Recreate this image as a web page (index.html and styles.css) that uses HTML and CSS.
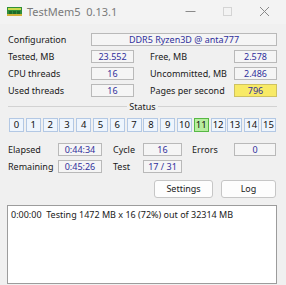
FILE: index.html
```html
<!DOCTYPE html>
<html>
<head>
<meta charset="utf-8">
<link rel="stylesheet" href="styles.css">
</head>
<body>
<div class="window">
  <div class="titlebar">
    <svg class="appicon" width="15" height="9" viewBox="0 0 15 9">
      <rect x="0" y="0" width="15" height="9" fill="#2f8f3a"/>
      <rect x="1" y="1" width="13" height="2" fill="#c9d94a"/>
      <rect x="2" y="4" width="3" height="3" fill="#1e6b2a"/>
      <rect x="6" y="4" width="3" height="3" fill="#1e6b2a"/>
      <rect x="10" y="4" width="3" height="3" fill="#1e6b2a"/>
      <rect x="0" y="7" width="15" height="2" fill="#d1b23a"/>
    </svg>
    <span class="title">TestMem5&nbsp;&nbsp;0.13.1</span>
    <div class="controls">
      <svg class="ctl" width="11" height="11" viewBox="0 0 11 11"><line x1="0.5" y1="5.5" x2="10.5" y2="5.5" stroke="#8a8a8a" stroke-width="1"/></svg>
      <svg class="ctl" width="11" height="11" viewBox="0 0 11 11"><rect x="1.5" y="1.5" width="8" height="8" fill="none" stroke="#d4d4d4" stroke-width="1"/></svg>
      <svg class="ctl" width="11" height="11" viewBox="0 0 11 11"><path d="M1 1 L10 10 M10 1 L1 10" stroke="#8a8a8a" stroke-width="1"/></svg>
    </div>
  </div>

  <div class="content">
    <div class="cfg">
      <span class="lbl">Configuration</span>
      <span class="field">DDR5 Ryzen3D @ anta777</span>
    </div>

    <div class="grid">
      <span class="lbl">Tested, MB</span><span class="field">23.552</span><span></span>
      <span class="lbl">Free, MB</span><span class="field">2.578</span>

      <span class="lbl">CPU threads</span><span class="field">16</span><span></span>
      <span class="lbl">Uncommitted, MB</span><span class="field">2.486</span>

      <span class="lbl">Used threads</span><span class="field">16</span><span></span>
      <span class="lbl">Pages per second</span><span class="field yellow">796</span>
    </div>

    <div class="sep"><span class="line"></span><span class="septext">Status</span><span class="line"></span></div>

    <div class="threads">
      <span class="t">0</span><span class="t">1</span><span class="t">2</span><span class="t">3</span>
      <span class="t">4</span><span class="t">5</span><span class="t">6</span><span class="t">7</span>
      <span class="t">8</span><span class="t">9</span><span class="t">10</span><span class="t active">11</span>
      <span class="t">12</span><span class="t">13</span><span class="t">14</span><span class="t">15</span>
    </div>

    <div class="grid2">
      <span class="lbl">Elapsed</span><span class="field">0:44:34</span><span></span>
      <span class="lbl">Cycle</span><span class="field">16</span><span></span>
      <span class="lbl">Errors</span><span class="field">0</span>

      <span class="lbl">Remaining</span><span class="field">0:45:26</span><span></span>
      <span class="lbl">Test</span><span class="field">17 / 31</span><span></span>
      <span></span><span></span>
    </div>

    <div class="buttons">
      <button class="btn settings">Settings</button>
      <button class="btn log">Log</button>
    </div>

    <div class="logbox">0:00:00&nbsp; Testing 1472 MB x 16 (72%) out of 32314 MB</div>
  </div>
</div>
</body>
</html>
```

FILE: styles.css
```css
html, body {
  margin: 0;
  padding: 0;
  background: #f0f0f0;
}
body {
  width: 286px;
  height: 285px;
  overflow: hidden;
  font-family: "Noto Sans", "Open Sans", sans-serif;
  font-size: 9px;
  color: #1a1a1a;
}
.window {
  width: 286px;
  height: 285px;
  background: #f0f0f0;
}
.titlebar {
  height: 24px;
  display: flex;
  align-items: center;
  background: #f3f3f3;
  padding-left: 7px;
}
.appicon {
  display: block;
  margin-top: -1px;
}
.title {
  margin-left: 5px;
  font-size: 11px;
  color: #7a7a7a;
  margin-top: -2px;
}
.controls {
  margin-left: auto;
  display: flex;
  gap: 26px;
  padding-right: 16px;
  margin-top: -2px;
}
.ctl { display: block; }

.content {
  padding: 9px 9px 0 8px;
}
.lbl {
  white-space: nowrap;
  line-height: 13px;
}
.field {
  height: 11px;
  line-height: 11px;
  border: 1px solid #b9b9b9;
  background: #f5f5f5;
  color: #30309c;
  text-align: center;
  white-space: nowrap;
}
.yellow {
  background: #f8ea66;
  border-color: #cfc260;
}
.cfg {
  display: grid;
  grid-template-columns: 83px 1fr;
  align-items: center;
  height: 13px;
}
.grid {
  display: grid;
  grid-template-columns: 83px 43px 16px 84px 43px;
  grid-auto-rows: 13px;
  row-gap: 4px;
  align-items: center;
  margin-top: 4px;
}
.sep {
  display: flex;
  align-items: center;
  margin-top: 3px;
  height: 13px;
}
.line {
  flex: 1;
  height: 1px;
  background: #d2d2d2;
}
.septext {
  padding: 0 2px;
  line-height: 13px;
}
.threads {
  display: flex;
  justify-content: space-between;
  margin-top: 5px;
  padding-left: 1px;
  padding-right: 1px;
}
.t {
  width: 13px;
  height: 12px;
  line-height: 12px;
  text-align: center;
  border: 1px solid #b3c8e4;
  background: #eef5fd;
  color: #111;
  font-size: 9.5px;
}
.t.active {
  background: #b7ee9f;
  border-color: #57b845;
}
.grid2 {
  display: grid;
  grid-template-columns: 50px 44px 11px 30px 39px 10px 42px 42px;
  grid-auto-rows: 13px;
  row-gap: 4px;
  align-items: center;
  margin-top: 11px;
}
.buttons {
  display: flex;
  justify-content: flex-end;
  gap: 8px;
  margin-top: 7px;
  padding-right: 1px;
}
.btn {
  height: 18px;
  padding: 0;
  border: 1px solid #c6c6c6;
  border-radius: 3px;
  background: #fdfdfd;
  font-family: "Noto Sans", "Open Sans", sans-serif;
  font-size: 9px;
  color: #1a1a1a;
  line-height: 16px;
}
.settings { width: 59px; }
.log { width: 55px; }
.logbox {
  margin-top: 7px;
  margin-left: -1px;
  width: 265px;
  height: 75px;
  border: 1px solid #9c9c9c;
  background: #ffffff;
  padding: 2px 0 0 3px;
  line-height: 13px;
  white-space: nowrap;
}
```
